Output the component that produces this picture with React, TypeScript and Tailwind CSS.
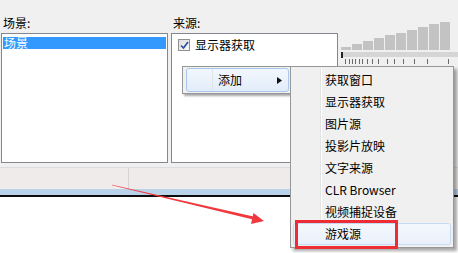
import React from 'react';

const BAR_HEIGHTS = [3, 6, 9, 12, 15, 17, 20, 23, 26, 28];
const TICKS = [345, 349, 352, 355, 359, 362, 367, 372, 378, 387, 394, 403, 414, 427, 448];

const SUB_ITEMS = ['获取窗口', '显示器获取', '图片源', '投影片放映', '文字来源', 'CLR Browser', '视频捕捉设备', '游戏源'];

const font = { fontFamily: '"Noto Sans CJK SC", "Noto Sans", sans-serif' };

const Meter: React.FC = () => (
  <div className="flex flex-col w-[117px]">
    <div className="mt-[22px] h-[28px] flex items-end gap-px">
      {BAR_HEIGHTS.map((h, i) => (
        <div key={i} className="w-[10px] bg-[#c3c3c3]" style={{ height: h }} />
      ))}
    </div>
    <svg width="117" height="14" className="mt-[2px]">
      <rect x="0" y="0" width="117" height="5" fill="#d5d5d5" />
      <rect x="0" y="0" width="2" height="6" fill="#222" />
      {TICKS.map((t) => (
        <rect key={t} x={t - 341} y="7" width="1" height="5" fill="#6b6b6b" />
      ))}
    </svg>
  </div>
);

const Checkbox: React.FC = () => (
  <div className="w-[12px] h-[12px] border border-[#8e8f8f] bg-gradient-to-br from-[#dcdcdc] to-[#fbfbfb] flex items-center justify-center">
    <svg width="9" height="9" viewBox="0 0 9 9">
      <path d="M1 4.5 L3.5 7 L8 1" stroke="#2b4a9c" strokeWidth="1.6" fill="none" />
    </svg>
  </div>
);

const App: React.FC = () => {
  return (
    <div className="relative w-[458px] h-[253px] bg-white overflow-hidden text-[12px] text-black" style={font}>
      <div className="flex flex-col h-[197px] bg-[#f0f0f0]">
        <div className="flex pl-px gap-[3px]">
          <div className="flex flex-col w-[167px]">
            <div className="mt-[15px] h-[16px] leading-[16px] pl-[2px]">场景:</div>
            <div className="mt-[2px] h-[130px] bg-white border border-[#828790] p-px">
              <div className="h-[12px] leading-[12px] bg-[#3399ff] text-white pl-px mt-[2px]">场景</div>
            </div>
          </div>
          <div className="flex flex-col w-[167px]">
            <div className="mt-[15px] h-[16px] leading-[16px] pl-[2px]">来源:</div>
            <div className="mt-[2px] h-[130px] bg-white border border-[#828790]">
              <div className="flex items-center gap-[5px] pl-[6px] mt-[5px] h-[12px]">
                <Checkbox />
                <span className="leading-[12px]">显示器获取</span>
              </div>
            </div>
          </div>
          <Meter />
        </div>
        <div className="mt-[4px] h-px bg-[#dcdcdc]" />
        <div className="h-[21px] bg-[#efebea] flex">
          <div className="w-[129px] border-r border-[#d5d2d0]" />
        </div>
        <div className="h-[6px] bg-[#bad2ea]" />
        <div className="h-[2px] bg-[#0c0c0c]" />
      </div>

      {/* context menu */}
      <div className="absolute left-[182px] top-[66px] w-[109px] h-[28px] bg-[#f0f0f0] border border-[#979797] shadow-[2px_2px_2px_rgba(0,0,0,0.35)] p-[1px]">
        <div className="relative h-[24px] ml-[2px] rounded-[3px] border border-[#a9c7ee] bg-gradient-to-b from-[#f2f7fd] to-[#e2ecfa] flex items-center">
          <div className="absolute left-[25px] top-0 bottom-0 w-px bg-[#dfe4ea]" />
          <span className="ml-[31px] leading-[14px]">添加</span>
          <svg width="5" height="7" className="ml-auto mr-[6px]">
            <path d="M0 0 L5 3.5 L0 7 Z" fill="#111" />
          </svg>
        </div>
      </div>

      {/* sub menu */}
      <div className="absolute left-[290px] top-[66px] w-[164px] h-[182px] bg-[#f0f0f0] border border-[#979797] shadow-[3px_3px_3px_rgba(0,0,0,0.35)] py-[1px] px-[1px]">
        <div className="absolute left-[29px] top-[1px] bottom-[1px] w-px bg-[#e2e3e3]" />
        <div className="absolute left-[30px] top-[1px] bottom-[1px] w-px bg-white" />
        <div className="relative flex flex-col pt-px">
          {SUB_ITEMS.map((label, i) => (
            <div
              key={label}
              className={
                i === SUB_ITEMS.length - 1
                  ? 'h-[22px] flex items-center ml-px mr-px rounded-[3px] border border-[#c5dbf5] bg-gradient-to-b from-[#f4f8fd] to-[#e9f0fb] pl-[31px]'
                  : 'h-[22px] flex items-center pl-[33px]'
              }
            >
              <span className="leading-[14px]">{label}</span>
            </div>
          ))}
        </div>
      </div>

      {/* red highlight box */}
      <div className="absolute left-[295px] top-[220px] w-[103px] h-[29px] border-[3px] border-[#ee2c34]" />

      {/* red arrow */}
      <svg className="absolute inset-0 pointer-events-none" width="458" height="253">
        <polygon points="112,184.7 112,185.3 254,219.7 254.6,216.8" fill="#f0393e" />
        <polygon points="264,221 253.5,213 251,224" fill="#f0393e" />
      </svg>
    </div>
  );
};

export default App;
